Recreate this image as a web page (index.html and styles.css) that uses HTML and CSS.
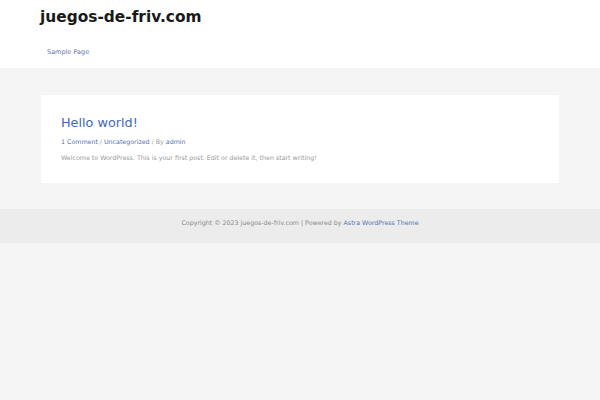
FILE: index.html
```html
<!DOCTYPE html>
<html>
<head>
<meta charset="utf-8">
<link rel="stylesheet" href="styles.css">
</head>
<body>
<header class="site-header">
  <div class="brand">juegos-de-friv.com</div>
  <nav class="nav"><a href="#">Sample Page</a></nav>
</header>
<main class="content">
  <article class="card">
    <h2 class="post-title">Hello world!</h2>
    <div class="meta"><a href="#">1 Comment</a> / <a href="#">Uncategorized</a> / By <a href="#">admin</a></div>
    <p class="excerpt">Welcome to WordPress. This is your first post. Edit or delete it, then start writing!</p>
  </article>
</main>
<footer class="footer">
  Copyright © 2023 juegos-de-friv.com | Powered by <a href="#">Astra WordPress Theme</a>
</footer>
</body>
</html>
```
FILE: styles.css
```css
html, body {
  margin: 0;
  padding: 0;
  background: #f5f5f5;
  font-family: "DejaVu Sans", Verdana, sans-serif;
}
a { text-decoration: none; color: #5470b5; }
.site-header {
  background: #ffffff;
  height: 68px;
  padding: 0 40px;
  box-sizing: border-box;
}
.brand {
  font-weight: bold;
  font-size: 15.4px;
  color: #1a1a1a;
  padding-top: 7px;
  line-height: 20px;
}
.nav {
  padding-top: 20px;
  padding-left: 7px;
  font-size: 6.5px;
  line-height: 10px;
}
.nav a { color: #6677b0; }
.content {
  padding: 27px 41px 26px;
}
.card {
  background: #ffffff;
  height: 88px;
  box-sizing: border-box;
  padding: 20px 20px 0;
}
.post-title {
  margin: 0;
  font-weight: normal;
  font-size: 12.8px;
  line-height: 16px;
  color: #4169b4;
}
.meta {
  margin-top: 6px;
  font-size: 6.3px;
  line-height: 10px;
  color: #999;
}
.excerpt {
  margin: 6px 0 0;
  font-size: 6.3px;
  line-height: 10px;
  color: #999;
}
.footer {
  background: #ececec;
  height: 34px;
  line-height: 28px;
  text-align: center;
  font-size: 6.3px;
  color: #888;
}
```
